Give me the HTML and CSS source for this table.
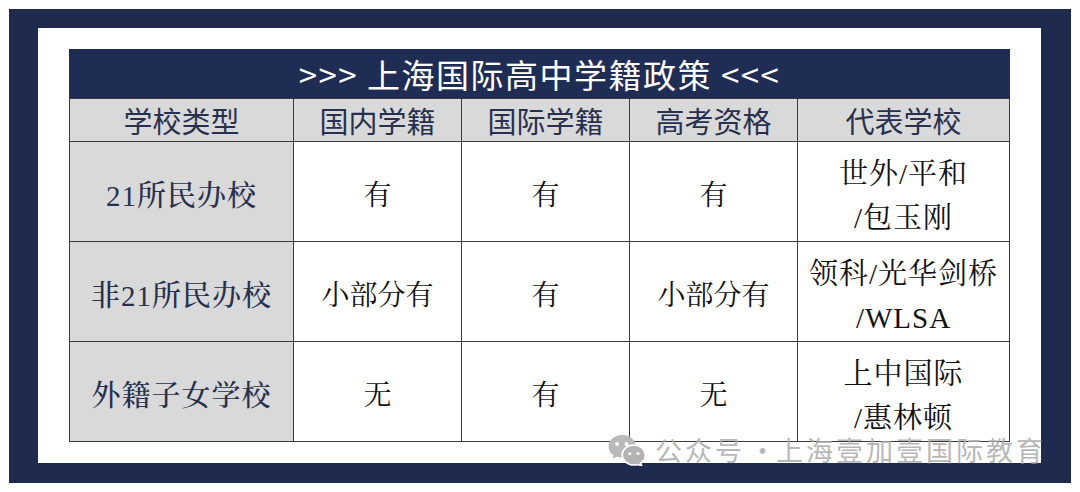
FILE: index.html
```html
<!DOCTYPE html>
<html lang="zh-CN">
<head>
<meta charset="utf-8">
<title>上海国际高中学籍政策</title>
<link rel="stylesheet" href="styles.css">
</head>
<body>
<div class="frame">
  <div class="sheet">
    <table class="policy">
      <colgroup>
        <col class="c1"><col class="c2"><col class="c3"><col class="c4"><col class="c5">
      </colgroup>
      <thead>
        <tr class="title-row"><th colspan="5">&gt;&gt;&gt; 上海国际高中学籍政策 &lt;&lt;&lt;</th></tr>
        <tr class="head-row">
          <th>学校类型</th><th>国内学籍</th><th>国际学籍</th><th>高考资格</th><th>代表学校</th>
        </tr>
      </thead>
      <tbody>
        <tr class="r1">
          <td class="type">21所民办校</td><td>有</td><td>有</td><td>有</td>
          <td class="rep">世外/平和<br>/包玉刚</td>
        </tr>
        <tr class="r2">
          <td class="type">非21所民办校</td><td>小部分有</td><td>有</td><td>小部分有</td>
          <td class="rep">领科/光华剑桥<br>/WLSA</td>
        </tr>
        <tr class="r3">
          <td class="type">外籍子女学校</td><td>无</td><td>有</td><td>无</td>
          <td class="rep">上中国际<br>/惠林顿</td>
        </tr>
      </tbody>
    </table>
    <div class="watermark">
      <svg class="wx" width="40" height="32" viewBox="0 0 40 32">
        <path d="M15 1C7.3 1 1.5 6.2 1.5 12.5c0 3.6 1.9 6.7 4.9 8.8L5.3 25l4.3-2.3c1.7.5 3.5.8 5.4.8 7.7 0 13.5-5.2 13.5-11.5S22.7 1 15 1z" fill="#b9b9b9"/>
        <circle cx="10" cy="10" r="1.9" fill="#fff"/>
        <circle cx="19.5" cy="10" r="1.9" fill="#fff"/>
        <path d="M27 11c-6.6 0-11.8 4.5-11.8 10s5.2 10 11.8 10c1.4 0 2.8-.2 4-.6l3.8 1.8-1-3.2c2.8-1.8 4.6-4.7 4.6-8 0-5.5-5.2-10-11.4-10z" fill="#b3b3b3" stroke="#fff" stroke-width="1.6"/>
        <circle cx="22.8" cy="19.5" r="1.6" fill="#fff"/>
        <circle cx="31" cy="19.5" r="1.6" fill="#fff"/>
      </svg>
      <span class="wm-text"><span class="wm-a">公众号</span><span class="wm-dot">·</span><span class="wm-b">上海壹加壹国际教育</span></span>
    </div>
  </div>
</div>
</body>
</html>
```

FILE: styles.css
```css
html, body {
  margin: 0;
  padding: 0;
  background: #ffffff;
}

.frame {
  margin: 9px 0 0 9px;
  width: 1062px;
  height: 474px;
  box-sizing: border-box;
  background: #1f2b4e;
  padding: 19px 30px 20px 29px;
}

.sheet {
  position: relative;
  width: 1003px;
  height: 435px;
  box-sizing: border-box;
  background: #ffffff;
  padding: 21px 0 0 31px;
}

.policy {
  border-collapse: collapse;
  table-layout: fixed;
  width: 940px;
}

.c1 { width: 224px; }
.c2 { width: 168px; }
.c3 { width: 168px; }
.c4 { width: 168px; }
.c5 { width: 212px; }

.policy th,
.policy td {
  padding: 0;
  text-align: center;
  vertical-align: middle;
  border: 1.5px solid #3a3a3a;
}

.title-row th {
  height: 48px;
  background: #1f2d55;
  color: #ffffff;
  font-family: "Noto Sans CJK SC", "Noto Sans", sans-serif;
  font-weight: 400;
  font-size: 33px;
  line-height: 48px;
  letter-spacing: 1.5px;
  border-color: #1f2d55;
  border-bottom-color: #3a3a3a;
}

.head-row th {
  height: 42px;
  background: #d9d9d9;
  color: #27314f;
  font-family: "Noto Sans CJK SC", "Noto Sans", sans-serif;
  font-weight: 400;
  font-size: 29px;
  line-height: 40px;
}

.policy tbody tr {
  height: 100px;
}

.policy td {
  padding-top: 8px;
  background: #ffffff;
  color: #111111;
  font-family: "Liberation Serif", "Noto Serif CJK SC", "Source Han Serif SC", "Noto Sans CJK SC", serif;
  font-size: 28px;
  line-height: 38px;
}

.policy td.type {
  background: #d9d9d9;
  color: #27314f;
  font-weight: 500;
  font-size: 29px;
  letter-spacing: 1px;
}

.policy td.rep {
  padding-top: 8px;
  font-size: 29px;
  line-height: 44px;
  letter-spacing: 1px;
}

.watermark {
  position: absolute;
  left: 569px;
  top: 406px;
  display: flex;
  align-items: center;
  gap: 8px;
}

.wx {
  display: block;
}

.wm-text {
  display: flex;
  align-items: center;
  font-family: "Noto Sans CJK SC", "Noto Sans", sans-serif;
  font-size: 27px;
  line-height: 30px;
  color: rgba(170, 170, 170, 0.85);
  letter-spacing: 3px;
  white-space: nowrap;
}

.wm-dot {
  margin: 0 0 0 4px;
  letter-spacing: 0;
}
```
